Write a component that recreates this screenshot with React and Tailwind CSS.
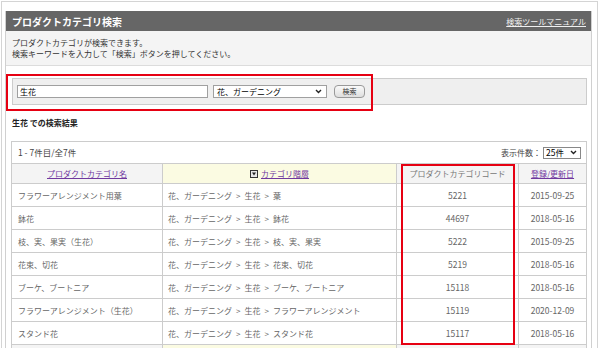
const rows = [
  ["フラワーアレンジメント用葉", "花、ガーデニング > 生花 > 葉", "5221", "2015-09-25"],
  ["鉢花", "花、ガーデニング > 生花 > 鉢花", "44697", "2018-05-16"],
  ["枝、実、果実（生花）", "花、ガーデニング > 生花 > 枝、実、果実", "5222", "2015-09-25"],
  ["花束、切花", "花、ガーデニング > 生花 > 花束、切花", "5219", "2018-05-16"],
  ["ブーケ、ブートニア", "花、ガーデニング > 生花 > ブーケ、ブートニア", "15118", "2018-05-16"],
  ["フラワーアレンジメント（生花）", "花、ガーデニング > 生花 > フラワーアレンジメント", "15119", "2020-12-09"],
  ["スタンド花", "花、ガーデニング > 生花 > スタンド花", "15117", "2018-05-16"],
];

function Chevron() {
  return (
    <svg width="7" height="5" viewBox="0 0 7 5" className="shrink-0">
      <path d="M1 1 L3.5 3.5 L6 1" fill="none" stroke="#222" strokeWidth="1.4" />
    </svg>
  );
}

function SortIcon() {
  return (
    <svg width="8" height="8" viewBox="0 0 8 8" className="shrink-0">
      <rect x="0.5" y="0.5" width="7" height="7" fill="#e8e8e8" stroke="#333" />
      <path d="M2 2.6 L6 2.6 L4 5.6 Z" fill="#222" />
    </svg>
  );
}

// path like "a > b > c", drawn with the wider gaps of the original
function CategoryPath({ path }) {
  const parts = path.split(" > ");
  return (
    <span className="flex items-center">
      {parts.map((p, i) => (
        <span key={i} className="flex items-center">
          {i > 0 && <span className="px-[4px]">&gt;</span>}
          <span>{p}</span>
        </span>
      ))}
    </span>
  );
}

export default function App() {
  return (
    <div className="relative h-[348px] w-[600px] overflow-hidden bg-white font-['Noto_Sans_CJK_JP',sans-serif] text-[8px] leading-[11px] text-[#333]">
      <div className="ml-[1px] mt-[1px] h-[420px] w-[597px] border border-[#d4d4d4] pl-[3px] pt-[9px]">
        <div className="h-[420px] w-[587px] border-x border-[#d0d0d0]">
          {/* title bar */}
          <div className="flex h-[20px] items-center justify-between bg-[#666666] pl-[6px] pr-[5px]">
            <span className="text-[10px] font-bold text-white">プロダクトカテゴリ検索</span>
            <span className="text-[8px] text-[#f0f0f0] underline">検索ツールマニュアル</span>
          </div>

          {/* description */}
          <div className="border-b border-[#dcdcdc] bg-[#f4f4f4] px-[6px] pb-[6px] pt-[6px]">
            <p>プロダクトカテゴリが検索できます。</p>
            <p>検索キーワードを入力して「検索」ボタンを押してください。</p>
          </div>

          <div className="pl-[5px] pr-[4px]">
            {/* search box */}
            <div className="ml-[1px] mt-[12px] flex h-[27px] items-center border border-[#cccccc] bg-[#efefef] pl-[4px]">
              <div className="flex h-[13px] w-[191px] items-center border border-[#a0a0a0] bg-white pl-[2px] text-[8px] text-black">
                生花
              </div>
              <div className="ml-[5px] flex h-[13px] w-[114px] items-center justify-between border border-[#a0a0a0] bg-white pl-[3px] pr-[4px] text-black">
                <span>花、ガーデニング</span>
                <Chevron />
              </div>
              <div className="ml-[7px] flex h-[13px] w-[31px] items-center justify-center rounded-[4px] border border-[#999] bg-gradient-to-b from-[#fafafa] to-[#dedede] text-[7px] text-[#333]">
                検索
              </div>
            </div>

            {/* results heading */}
            <p className="ml-[1px] mt-[12px] font-bold text-[#222]">生花 での検索結果</p>

            {/* results table */}
            <div className="mt-[13px] w-[576px] border border-[#cccccc] text-[#666]">
              <div className="flex h-[22px] items-center justify-between border-b border-[#cccccc] pl-[6px] pr-[5px]">
                <span className="text-[8.5px] text-[#444]">1 - 7件目/全7件</span>
                <div className="flex items-center gap-[2px]">
                  <span className="text-[#444]">表示件数：</span>
                  <div className="flex h-[12px] w-[38px] items-center justify-between border border-[#888] bg-white pl-[2px] pr-[3px] text-[8.5px] text-black">
                    <span>25件</span>
                    <Chevron />
                  </div>
                </div>
              </div>

              <div className="grid h-[20px] grid-cols-[150px_234px_122px_1fr] border-b border-[#cccccc]">
                <div className="flex items-center justify-center bg-[#f4f4f4] text-[#70389f] underline">
                  プロダクトカテゴリ名
                </div>
                <div className="flex items-center justify-center gap-[3px] border-l border-[#cccccc] bg-[#fbfbe2]">
                  <SortIcon />
                  <span className="text-[#70389f] underline">カテゴリ階層</span>
                </div>
                <div className="flex items-center justify-center border-l border-[#cccccc] bg-[#f4f4f4] text-[#777]">
                  プロダクトカテゴリコード
                </div>
                <div className="flex items-center justify-center border-l border-[#cccccc] bg-[#f4f4f4] text-[#70389f] underline">
                  登録/更新日
                </div>
              </div>

              {rows.map((r) => (
                <div
                  key={r[2]}
                  className="grid h-[23px] grid-cols-[150px_234px_122px_1fr] border-b border-[#cccccc]"
                >
                  <div className="flex items-center pl-[6px]">{r[0]}</div>
                  <div className="flex items-center border-l border-[#cccccc] pl-[5px]">
                    <CategoryPath path={r[1]} />
                  </div>
                  <div className="flex items-center justify-center border-l border-[#cccccc] text-[8.5px]">{r[2]}</div>
                  <div className="flex items-center justify-center border-l border-[#cccccc] text-[8.5px]">{r[3]}</div>
                </div>
              ))}

              <div className="grid h-[20px] grid-cols-[150px_234px_122px_1fr]">
                <div className="bg-[#f4f4f4]" />
                <div className="border-l border-[#cccccc] bg-[#fbfbe2]" />
                <div className="border-l border-[#cccccc] bg-[#f4f4f4]" />
                <div className="border-l border-[#cccccc] bg-[#f4f4f4]" />
              </div>
            </div>
          </div>
        </div>
      </div>

      {/* annotation boxes */}
      <div className="absolute left-[6px] top-[74px] h-[37px] w-[367px] border-2 border-[#e60012]" />
      <div className="absolute left-[401px] top-[164px] h-[181px] w-[114px] border-2 border-[#e60012]" />
    </div>
  );
}
